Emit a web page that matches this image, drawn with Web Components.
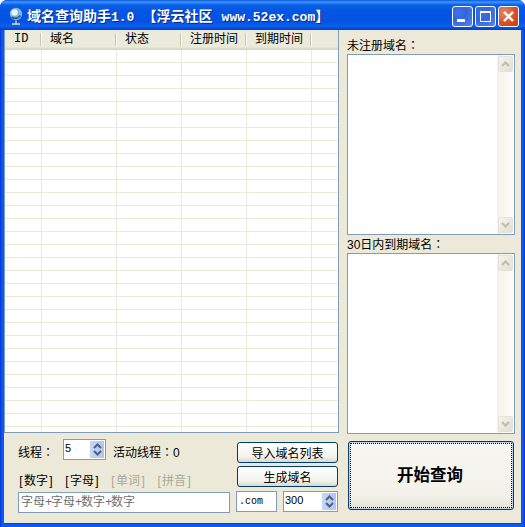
<!DOCTYPE html>
<html><head><meta charset="utf-8">
<style>
html,body{margin:0;padding:0;background:#fff;overflow:hidden}
body{width:525px;height:527px;font:12px "Noto Sans CJK SC",sans-serif;color:#000}
</style></head><body>
<xp-window></xp-window>
<script>
const CJK='"Liberation Sans","Noto Sans CJK SC",sans-serif';
const colon='<span style="font-family:\'Noto Sans CJK TC\',sans-serif">：</span>';
const br=t=>`<b style="display:inline-block;width:6px;font-weight:400;text-align:center">[</b>${t}<b style="display:inline-block;width:6px;font-weight:400;text-align:center">]</b>`;
const plus='<b style="display:inline-block;width:6px;font-weight:400;text-align:center;font-family:\'Liberation Mono\',monospace">+</b>';
function def(name,css,html){
  customElements.define(name,class extends HTMLElement{
    constructor(){super();const r=this.attachShadow({mode:'open'});
      r.innerHTML='<style>'+css+'</style>'+(typeof html==='function'?html(this):html);}
  });
}
const arrow=(up,c)=>`<svg width="9" height="6" viewBox="0 0 9 6"><path d="${up?'M1 5L4.5 1.5L8 5':'M1 1L4.5 4.5L8 1'}" fill="none" stroke="${c}" stroke-width="2"/></svg>`;

def('xp-titlebar',`
:host{display:flex;align-items:center;height:30px;flex:none;box-sizing:border-box;padding:0 6px 0 8px;
 background:linear-gradient(180deg,#0a57d8 0,#3d95ff 2px,#0a5fe6 5px,#0355e2 11px,#0454e3 22px,#0a62ee 26px,#0345cf 29px,#0241c4 30px);
 color:#fff}
.t{margin-left:3px;font:bold 14px "Noto Sans CJK SC",sans-serif;white-space:nowrap;text-shadow:1px 1px 0 #0a2a8c;flex:1;overflow:hidden}
.m{font:bold 13px "Liberation Mono",monospace}
.w{margin-left:9px}
.k{margin-left:5px}
.btns{display:flex;gap:2px;margin-top:3px}
`,`<svg width="16" height="19" viewBox="0 0 16 19"><circle cx="8" cy="8" r="6.2" fill="#7fb4e0"/><circle cx="6.5" cy="6.5" r="3.2" fill="#e6f4fb"/><path d="M3.5 11c2.5 2 6.5 2 9-1.500" stroke="#2a659f" stroke-width="2" fill="none"/><path d="M8 14.500v3M4 18h8" stroke="#e8d8a0" stroke-width="1.400"/></svg>
<span class="t">域名查询助手<span class="m">1.0</span> <span class="k">【浮云社区</span><span class="m w">www.52ex.com</span>】</span>
<span class="btns"><slot></slot></span>`);

def('xp-capbtn',`
:host{display:block;width:21px;height:21px;box-sizing:border-box;border:1px solid #fff;border-radius:3px;
 background:radial-gradient(circle at 30% 30%,#3d73ee 0,#3364dd 40%,#5a85ea 100%)}
:host([kind=close]){background:radial-gradient(circle at 30% 30%,#e38a6c 0,#d6512b 55%,#c63a12 100%)}
svg{display:block}
`,h=>{const k=h.getAttribute('kind');
 if(k==='min')return '<svg width="19" height="19"><rect x="4" y="12" width="8" height="3" fill="#fff"/></svg>';
 if(k==='max')return '<svg width="19" height="19"><path d="M4.500 5.500h10v9h-10z" fill="none" stroke="#fff"/><rect x="4" y="4" width="11" height="2" fill="#fff"/></svg>';
 return '<svg width="19" height="19"><path d="M5 5l9 9M14 5l-9 9" stroke="#fff" stroke-width="2.400"/></svg>';});

def('xp-listview',`
:host{display:flex;flex-direction:column;box-sizing:border-box;width:335px;height:403px;background:#fff;border-left:1px solid #7f9db9;border-bottom:1px solid #7f9db9;border-right:1px solid #7f9db9;overflow:hidden}
.h{display:grid;grid-template-columns:37px 75px 65px 65px 65px 1fr;height:20px;flex:none;background:linear-gradient(#ebeadb 0,#ebeadb 17px,#e2decd 18px,#d6d2c2 20px);font:12px ${CJK}}
.h span{box-sizing:border-box;padding-left:8px;line-height:19px;position:relative;white-space:nowrap}
.h span:first-child{font:12px/19px "Liberation Mono",monospace;padding-left:9px}
.h span::after{content:"";position:absolute;right:1px;top:3px;bottom:4px;width:1px;background:#c7c5b2;box-shadow:1px 0 #fff}
.h span:last-child::after{display:none}
.b{flex:1;position:relative;
 background:repeating-linear-gradient(180deg,transparent 0,transparent 12px,#ece9d8 12px,#ece9d8 13px)}
.c{position:absolute;inset:0;display:grid;grid-template-columns:37px 75px 65px 65px 65px 1fr}
.c i{border-right:1px solid #ece9d8}
.c i:last-child{border:0}
`,`<div class="h"><span>ID</span><span>域名</span><span>状态</span><span>注册时间</span><span>到期时间</span><span></span></div>
<div class="b"><div class="c"><i></i><i></i><i></i><i></i><i></i><i></i></div></div>`);

def('xp-scrollbox',`
:host{display:flex;box-sizing:border-box;border:1px solid #7f9db9;background:#fff;height:var(--h,181px);justify-content:flex-end}
.s{width:17px;box-sizing:border-box;padding:1px 1px 1px 0;display:flex;flex-direction:column;justify-content:space-between;background:linear-gradient(90deg,#f3f2ea,#fdfdfa)}
.a{width:15px;height:16px;box-sizing:border-box;margin-left:1px;border:1px solid #e4e2d6;border-radius:2px;background:linear-gradient(135deg,#f5f4ee,#e0dfd4);display:flex;align-items:center;justify-content:center}
`,`<div class="s"><div class="a">${arrow(true,'#bdbdac')}</div><div class="a">${arrow(false,'#bdbdac')}</div></div>`);

def('xp-field',`
:host{display:flex;flex-direction:column}
.l{height:var(--lh,24px);box-sizing:border-box;padding-top:var(--lp,8px);white-space:nowrap;font:12px/14px ${CJK}}
`,`<div class="l"><slot name="label"></slot></div><slot></slot>`);

def('xp-spin',`
:host{display:flex;box-sizing:border-box;border:1px solid #7f9db9;background:#fff;height:21px;font:11px/14px "Liberation Sans",sans-serif;align-items:flex-start;padding:1px 0 1px 1px;justify-content:space-between}
.b{width:14px;height:17px;margin-right:1px;background:linear-gradient(90deg,#c7d5f6,#b2c5f1);display:flex;flex-direction:column;align-items:center;justify-content:center;gap:1px}
svg{display:block}
`,h=>`<span>${h.getAttribute('value')}</span><div class="b">${arrow(true,'#4d6185')}${arrow(false,'#4d6185')}</div>`);

def('xp-btn',`
:host{display:flex;align-items:center;justify-content:center;box-sizing:border-box;border:1px solid #003c74;border-radius:3px;background:linear-gradient(#fff,#f3f3ee 70%,#dcd8ca);height:21px;font:12px ${CJK};white-space:nowrap}
`,`<slot></slot>`);

def('xp-bigbtn',`
:host{display:flex;align-items:center;justify-content:center;box-sizing:border-box;height:69px;padding:0 2px 3px 0;border:1px solid #003c74;border-radius:3px;background:linear-gradient(#f7f6f1,#f2f1ea 80%,#e6e3d6);font:bold 16.500px "Noto Sans CJK SC",sans-serif;position:relative;box-shadow:inset 0 0 0 1px #bcd0f0}
:host::after{content:"";position:absolute;inset:1px;border:1px dotted #000}
`,`<slot></slot>`);

def('xp-input',`
:host{display:block;box-sizing:border-box;border:1px solid #7f9db9;background:#fff;height:21px;font:12px/17px ${CJK};padding:1px 2px;white-space:nowrap;overflow:hidden}
`,`<slot></slot>`);

def('xp-window',`
:host{display:flex;flex-direction:column;width:525px;height:527px;box-sizing:border-box;background:linear-gradient(90deg,#0831d9 0,#0a5af0 2px,#0a5af0 calc(100% - 2px),#0831d9 100%);border-radius:7px 7px 0 0;overflow:hidden}
.main{flex:1;display:flex;margin:0 4px 4px;background:#ece9d8;box-shadow:0 1px 0 #0b3bd0}
.left{width:335px;display:flex;flex-direction:column;flex:none}
.right{flex:1;box-sizing:border-box;padding:0 0 0 8px;display:flex;flex-direction:column}
.right xp-scrollbox{width:168px}
.bottom{display:flex;flex-direction:column;box-sizing:border-box;padding:6px 0 0 14px;flex:1;font:12px ${CJK}}
.r1{display:flex;height:25px;align-items:flex-start}
.r1 .tl{width:45px;line-height:26px;white-space:nowrap}
.r1 xp-spin{width:43px;flex:none}
.r1 .act{margin-left:7px;line-height:26px;flex:1;white-space:nowrap}
.r1 .c{display:flex;flex-direction:column;gap:3px;width:101px;flex:none;margin:3px 1px 0 0}
.r2{display:flex;gap:10px;margin-top:10px;line-height:14px}
.r2 span{white-space:nowrap}
.g{color:#a9a89a}
.r3{display:flex;gap:6px;margin-top:3px;align-items:flex-start}
.r3 .big{width:212px;color:#6f6f6f;margin-top:1px}
.r3 .com{width:41px;font:10px/17px "Liberation Mono",monospace;padding-left:2px}
.r3 xp-spin{width:55px}
xp-bigbtn{width:166px;margin-top:7px;margin-left:1px}
`,`<xp-titlebar><xp-capbtn kind="min"></xp-capbtn><xp-capbtn kind="max"></xp-capbtn><xp-capbtn kind="close"></xp-capbtn></xp-titlebar>
<div class="main">
<div class="left"><xp-listview></xp-listview>
<div class="bottom">
 <div class="r1"><span class="tl">线程${colon}</span><xp-spin value="5"></xp-spin><span class="act">活动线程${colon}0</span>
 <div class="c"><xp-btn>导入域名列表</xp-btn><xp-btn>生成域名</xp-btn></div></div>
 <div class="r2"><span>${br('数字')}</span><span>${br('字母')}</span><span class="g">${br('单词')}</span><span class="g">${br('拼音')}</span></div>
 <div class="r3"><xp-input class="big">字母${plus}字母${plus}数字${plus}数字</xp-input><xp-input class="com">.com</xp-input><xp-spin value="300"></xp-spin></div>
</div></div>
<div class="right">
 <xp-field><span slot="label">未注册域名${colon}</span><xp-scrollbox></xp-scrollbox></xp-field>
 <xp-field style="--lh:18px;--lp:2px"><span slot="label">30日内到期域名${colon}</span><xp-scrollbox></xp-scrollbox></xp-field>
 <xp-bigbtn>开始查询</xp-bigbtn>
</div></div>`);
</script>
</body></html>
